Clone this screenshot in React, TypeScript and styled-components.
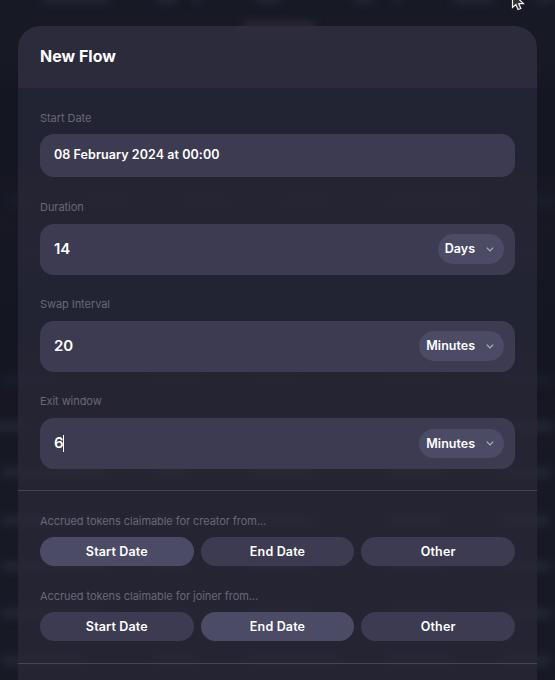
import React from "react";
import styled, { createGlobalStyle } from "styled-components";

const GlobalStyle = createGlobalStyle`
  * { box-sizing: border-box; }
  html, body { margin: 0; height: 100%; overflow: hidden; background: #151622; }
  body { font-family: Inter, "Liberation Sans", sans-serif; color: #fff; }
  button { font: inherit; color: inherit; border: 0; outline: 0; }
`;

const Page = styled.div`
  position: relative;
  width: 555px;
  height: 680px;
  padding: 26px 18px 0;
  overflow: hidden;
  background: linear-gradient(#171925 0, #171925 60px, #141622 95px, #141622 170px,
    #171824 190px, #151722 270px, #141621 345px, #161722 400px, #171924 480px, #171925 680px);
`;

const Smudge = styled.div<{ $x: number; $y: number; $w: number; $tone: string }>`
  position: absolute;
  left: ${(p) => p.$x}px;
  top: ${(p) => p.$y}px;
  width: ${(p) => p.$w}px;
  height: 9px;
  border-radius: 5px;
  background: ${(p) => p.$tone};
  filter: blur(5px);
`;

const Modal = styled.section`
  position: relative;
  height: 700px;
  border-radius: 22px 22px 0 0;
  overflow: hidden;
`;

const Header = styled.header`
  height: 62px;
  padding: 0 22px;
  background: rgba(46, 44, 61, 0.96);
`;

const Title = styled.h1`
  margin: 0;
  font-size: 16px;
  font-weight: 700;
  line-height: 61px;
`;

const Body = styled.div`
  height: 638px;
  background: linear-gradient(
    rgba(38, 39, 55, 0.8) 0, rgba(38, 39, 55, 0.8) 70px,
    rgba(41, 39, 54, 0.8) 110px, rgba(41, 40, 58, 0.8) 165px,
    rgba(38, 39, 55, 0.8) 190px, rgba(38, 39, 55, 0.8) 240px,
    rgba(41, 39, 55, 0.8) 300px, rgba(41, 39, 55, 0.8) 100%
  );
`;

const Section = styled.div`
  display: flex;
  flex-direction: column;
  gap: 21px;
  padding: 22px 22px 21px;
`;

const Choices = styled(Section)`
  gap: 22px;
  padding-bottom: 22px;
  border: solid #464553;
  border-width: 1px 0;
`;

const Field = styled.div<{ $gap?: number }>`
  display: flex;
  flex-direction: column;
  gap: ${(p) => p.$gap ?? 8}px;
`;

const DateField = styled(Field)`
  margin-bottom: 1px;
`;

const Label = styled.span`
  font-size: 11px;
  line-height: 16px;
  letter-spacing: -0.06px;
  color: #696876;
`;

const Box = styled.div<{ $tall?: boolean }>`
  display: flex;
  align-items: center;
  justify-content: space-between;
  height: ${(p) => (p.$tall ? 51 : 43)}px;
  padding: 0 11px 0 14px;
  border-radius: 14px;
  background: #3c3b52;
`;

const DateText = styled.span`
  font-size: 12.5px;
  font-weight: 600;
  line-height: 16px;
  letter-spacing: 0.07px;
  padding-bottom: 1px;
`;

const Amount = styled.span`
  display: flex;
  align-items: center;
  height: 17px;
  padding-bottom: 2px;
  font-size: 15px;
  font-weight: 600;
`;

const Caret = styled.i`
  width: 1px;
  height: 17px;
  margin: 1px 0 0 -1px;
  background: #fff;
`;

const Select = styled.button<{ $compact?: boolean }>`
  display: flex;
  align-items: center;
  justify-content: space-between;
  gap: 10px;
  height: ${(p) => (p.$compact ? 29 : 30)}px;
  margin-bottom: ${(p) => (p.$compact ? 0 : 1)}px;
  padding: 0 9px 1px 7px;
  border-radius: 15px;
  background: #4b4b66;
  font-size: 12.5px;
  font-weight: 600;
`;

const Options = styled.div`
  display: grid;
  grid-template-columns: repeat(3, 1fr);
  gap: 7px;
`;

const Option = styled.button<{ $active: boolean }>`
  height: 29px;
  padding: 0 0 1px;
  border-radius: 15px;
  background: ${(p) => (p.$active ? "#4b4b66" : "#3c3b52")};
  font-size: 12.5px;
  font-weight: 600;
  letter-spacing: 0.15px;
`;

const Cursor = styled.svg`
  position: absolute;
  left: 511px;
  top: -8px;
`;

const Chevron = () => (
  <svg width="10" height="10" viewBox="0 0 10 10" fill="none" stroke="#b1b0bd" strokeWidth="1.2">
    <path d="M1.8 3.6 5 6.8 8.2 3.6" />
  </svg>
);

const amounts = [
  { label: "Duration", value: "14", unit: "Days" },
  { label: "Swap Interval", value: "20", unit: "Minutes" },
  { label: "Exit window", value: "6", unit: "Minutes", editing: true },
];

const claims = [
  { label: "Accrued tokens claimable for creator from...", active: "Start Date" },
  { label: "Accrued tokens claimable for joiner from...", active: "End Date" },
];

const blue = "#19202f";
const grey = "#242936";
const rows: [number, string, [number, number][]][] = [
  [-6, grey, [[42, 68], [155, 24], [192, 10], [255, 26], [352, 22], [393, 10], [452, 42], [535, 20]]],
  [197, blue, [[10, 25], [84, 50], [178, 57], [276, 58], [380, 105], [526, 30]]],
  [376, blue, [[0, 62], [150, 52], [248, 52], [382, 60], [500, 55]]],
  [422, grey, [[-8, 36], [500, 55]]],
  [468, grey, [[0, 108], [152, 40], [247, 68], [385, 62], [502, 50]]],
  [516, grey, [[0, 108], [152, 40], [247, 68], [385, 62], [500, 50]]],
  [562, grey, [[0, 108], [152, 40], [247, 68], [385, 62], [502, 50]]],
  [609, grey, [[0, 108], [152, 40], [247, 68], [385, 62], [502, 50]]],
  [656, grey, [[0, 86], [152, 46], [247, 92], [385, 68], [502, 50]]],
];

export default function App() {
  return (
    <Page>
      <GlobalStyle />
      {rows.map(([y, tone, spans]) =>
        spans.map(([x, w]) => <Smudge key={`${y}-${x}`} $x={x} $y={y} $w={w} $tone={tone} />)
      )}
      <Smudge $x={242} $y={22} $w={74} $tone="#302a38" />
      <Modal>
        <Header>
          <Title>New Flow</Title>
        </Header>
        <Body>
          <Section>
            <DateField>
              <Label>Start Date</Label>
              <Box>
                <DateText>08 February 2024 at 00:00</DateText>
              </Box>
            </DateField>
            {amounts.map((a) => (
              <Field key={a.label} $gap={9}>
                <Label>{a.label}</Label>
                <Box $tall>
                  <Amount>
                    {a.value}
                    {a.editing && <Caret />}
                  </Amount>
                  <Select $compact={a.editing}>
                    {a.unit}
                    <Chevron />
                  </Select>
                </Box>
              </Field>
            ))}
          </Section>
          <Choices>
            {claims.map((c) => (
              <Field key={c.label}>
                <Label>{c.label}</Label>
                <Options>
                  {["Start Date", "End Date", "Other"].map((o) => (
                    <Option key={o} $active={o === c.active}>
                      {o}
                    </Option>
                  ))}
                </Options>
              </Field>
            ))}
          </Choices>
        </Body>
      </Modal>
      <Cursor width="14" height="20" viewBox="0 0 14 20">
        <path
          d="M1.5 1v14.5l3.4-3 2.1 5 2.8-1.1-2.1-4.8h4.7z"
          fill="#333235"
          stroke="#f1f1f3"
          strokeWidth="1.2"
        />
      </Cursor>
    </Page>
  );
}
